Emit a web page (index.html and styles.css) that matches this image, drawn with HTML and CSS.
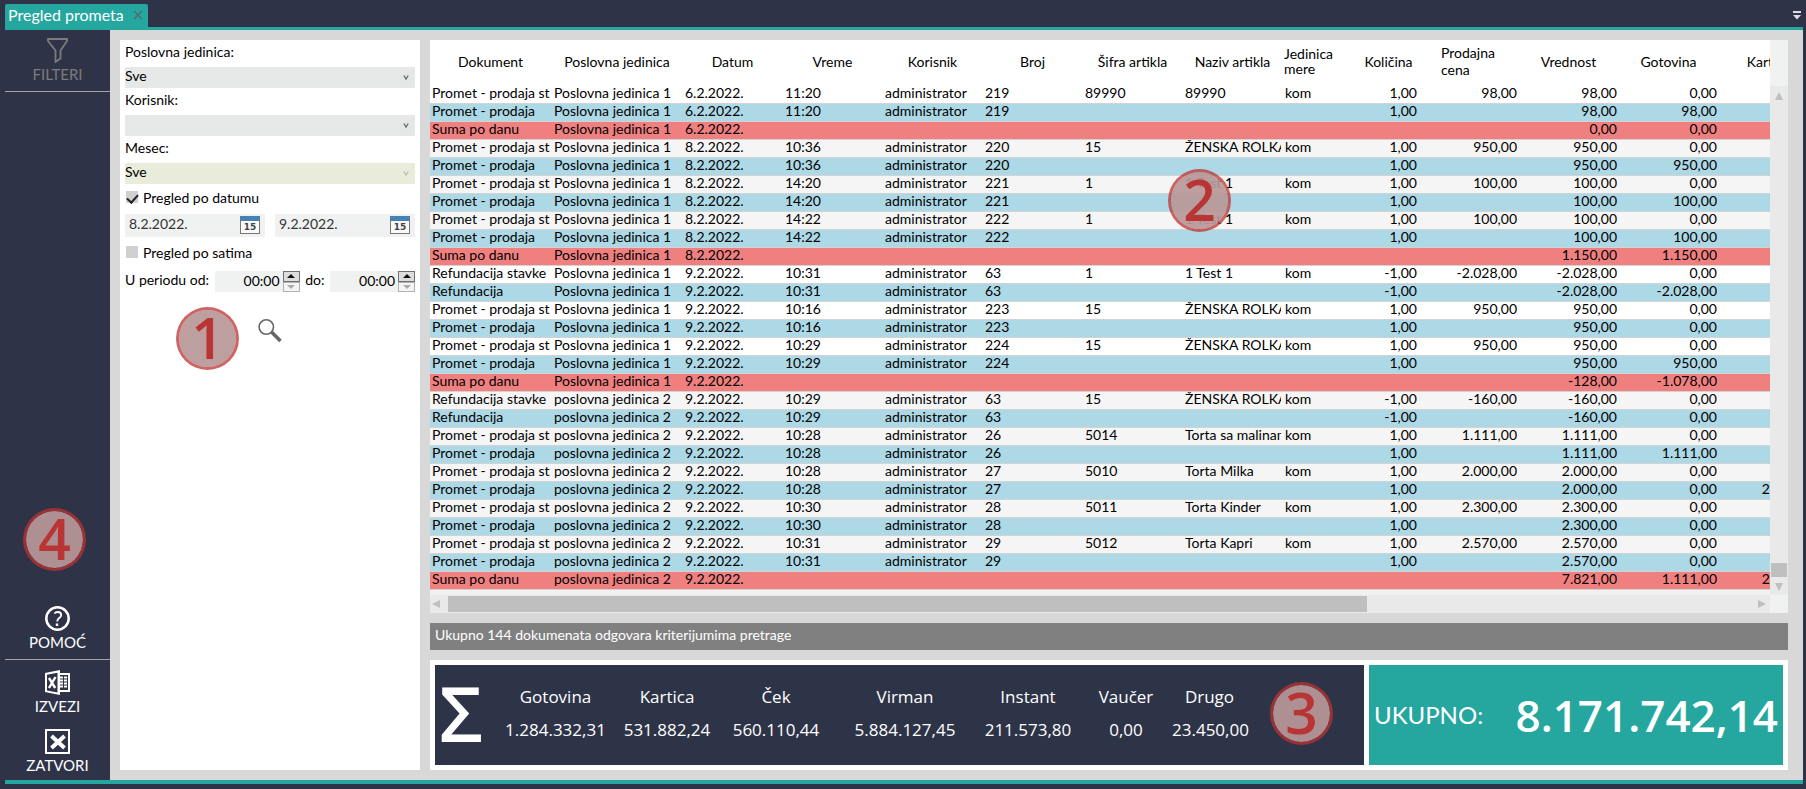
FILE: index.html
```html
<!DOCTYPE html>
<html lang="sr">
<head>
  <meta charset="UTF-8">
  <title>Pregled prometa</title>
  <link rel="stylesheet" href="styles.css">
</head>

<body>
  <!-- Tabs -->
  <header class="tab-bar">
    <div class="tab">
      <span class="tab-title">Pregled prometa</span>
      <button class="tab-close" aria-label="Zatvori karticu">
        <svg width="10" height="10" viewBox="0 0 10 10"><path d="M1 1l8 8M9 1L1 9" stroke="#4d6e75" stroke-width="1.6" fill="none"/></svg>
      </button>
    </div>
    <button class="tab-menu" aria-label="Lista kartica">
      <svg width="8" height="9" viewBox="0 0 8 9"><path d="M0 0h8v2H0zM0 4h8L4 8.500z" fill="#dcdde4"/></svg>
    </button>
  </header>

  <div class="workspace">
    <!-- Sidebar -->
    <nav class="sidebar">
      <button class="side-item divided disabled" disabled>
        <svg width="25" height="25" viewBox="0 0 25 25"><path d="M3 1h19v2l-6.500 9.500v8L10.500 24v-11.500L3 3z" stroke="#7c7c7c" stroke-width="1.800" fill="none"/></svg>
        <span>FILTERI</span>
      </button>
      <div class="side-space"></div>
      <button class="side-item divided">
        <svg width="25" height="25" viewBox="0 0 25 25" fill="none" stroke="#fff"><circle cx="12.500" cy="12.500" r="11.200" stroke-width="2.500"/><path d="M9.300 7.500q1.400-1.500 3.500-1.500 3.400 0 3.400 2.900 0 1.600-2 3t-2 3.600" stroke-width="1.800"/><path d="M12 17.500v2.500" stroke-width="2.400"/></svg>
        <span>POMOĆ</span>
      </button>
      <button class="side-item">
        <svg width="25" height="25" viewBox="0 0 25 25"><path d="M0 3L15 0v3h10v19H15v3L0 22zM2 4.700v15.700l10.500 2V2.700zM15 5v15h8V5z" fill="#fff" fill-rule="evenodd"/><path d="M4 8l6.200 10M10.500 7L4 18" stroke="#fff" stroke-width="2.400"/><path d="M15 7.500h7M15 10.500h7M15 13.500h7M15 16.500h7" stroke="#fff" stroke-width="2"/><path d="M18.500 5v14" stroke="#2e3448" stroke-width="1"/></svg>
        <span>IZVEZI</span>
      </button>
      <button class="side-item">
        <svg width="25" height="25" viewBox="0 0 25 25" fill="none" stroke="#fff"><path d="M1 1h23v23H1z" stroke-width="2"/><path d="M6.500 7l13 12M19.500 7l-13 12" stroke-width="4"/></svg>
        <span>ZATVORI</span>
      </button>
      <span class="badge badge-4">4</span>
    </nav>

    <main class="content">
      <!-- Filters -->
      <form class="filters">
        <label class="field-label" for="unit">Poslovna jedinica:</label>
        <div class="select-box">
          <select id="unit"><option>Sve</option></select>
          <svg width="6" height="6" viewBox="0 0 6 6"><path d="M.8.500L3 4 5.200.500" stroke="#666" stroke-width="1.300" fill="none"/></svg>
        </div>
        <label class="field-label" for="user">Korisnik:</label>
        <div class="select-box">
          <select id="user"><option></option></select>
          <svg width="6" height="6" viewBox="0 0 6 6"><path d="M.8.500L3 4 5.200.500" stroke="#666" stroke-width="1.300" fill="none"/></svg>
        </div>
        <label class="field-label" for="month">Mesec:</label>
        <div class="select-box muted">
          <select id="month" disabled><option>Sve</option></select>
          <svg width="6" height="6" viewBox="0 0 6 6"><path d="M.8.500L3 4 5.200.500" stroke="#bbb" stroke-width="1.300" fill="none"/></svg>
        </div>

        <label class="check"><input type="checkbox" checked><span>Pregled po datumu</span></label>
        <div class="dates">
          <div class="date-box">
            <input type="text" value="8.2.2022." aria-label="Datum od">
            <button type="button" class="calendar" aria-label="Izaberi datum od"><span>15</span></button>
          </div>
          <div class="date-box">
            <input type="text" value="9.2.2022." aria-label="Datum do">
            <button type="button" class="calendar" aria-label="Izaberi datum do"><span>15</span></button>
          </div>
        </div>

        <label class="check hours"><input type="checkbox"><span>Pregled po satima</span></label>
        <div class="period">
          <label for="from">U periodu od:</label>
          <div class="time-box">
            <input id="from" type="text" value="00:00">
            <div class="spinner">
              <button type="button" aria-label="Više"><svg width="8" height="4" viewBox="0 0 8 4"><path d="M0 4l4-4 4 4z" fill="#111"/></svg></button>
              <button type="button" class="down" aria-label="Manje"><svg width="8" height="4" viewBox="0 0 8 4"><path d="M0 0l4 4 4-4z" fill="#aaa"/></svg></button>
            </div>
          </div>
          <label for="to">do:</label>
          <div class="time-box">
            <input id="to" type="text" value="00:00">
            <div class="spinner">
              <button type="button" aria-label="Više"><svg width="8" height="4" viewBox="0 0 8 4"><path d="M0 4l4-4 4 4z" fill="#111"/></svg></button>
              <button type="button" class="down" aria-label="Manje"><svg width="8" height="4" viewBox="0 0 8 4"><path d="M0 0l4 4 4-4z" fill="#aaa"/></svg></button>
            </div>
          </div>
        </div>

        <button type="button" class="search" aria-label="Pretraga">
          <svg width="24" height="24" viewBox="0 0 24 24" fill="none" stroke="#666"><circle cx="8.300" cy="8" r="7.200" stroke-width="1.600"/><path d="M13.500 13l9 9" stroke-width="3.600"/></svg>
        </button>
        <span class="badge badge-1">1</span>
      </form>

      <section class="report">
        <!-- Data grid -->
        <div class="grid">
          <div class="grid-view">
            <table>
              <colgroup>
                <col class="c-doc"><col class="c-unit"><col><col><col><col><col><col><col class="c-jm"><col class="c-qty"><col><col><col><col>
              </colgroup>
              <thead>
                <tr><th>Dokument</th><th>Poslovna jedinica</th><th>Datum</th><th>Vreme</th><th>Korisnik</th><th>Broj</th><th>Šifra artikla</th><th>Naziv artikla</th><th class="left tight">Jedinica<br>mere</th><th>Količina</th><th class="left price">Prodajna<br>cena</th><th>Vrednost</th><th>Gotovina</th><th>Kartica</th></tr>
              </thead>
              <tbody>
                <tr><td>Promet - prodaja stavke</td><td>Poslovna jedinica 1</td><td>6.2.2022.</td><td>11:20</td><td>administrator</td><td>219</td><td>89990</td><td>89990</td><td>kom</td><td>1,00</td><td>98,00</td><td>98,00</td><td>0,00</td><td></td></tr>
                <tr class="doc"><td>Promet - prodaja</td><td>Poslovna jedinica 1</td><td>6.2.2022.</td><td>11:20</td><td>administrator</td><td>219</td><td></td><td></td><td></td><td>1,00</td><td></td><td>98,00</td><td>98,00</td><td></td></tr>
                <tr class="sum"><td>Suma po danu</td><td>Poslovna jedinica 1</td><td>6.2.2022.</td><td></td><td></td><td></td><td></td><td></td><td></td><td></td><td></td><td>0,00</td><td>0,00</td><td></td></tr>
                <tr class="alt"><td>Promet - prodaja stavke</td><td>Poslovna jedinica 1</td><td>8.2.2022.</td><td>10:36</td><td>administrator</td><td>220</td><td>15</td><td>ŽENSKA ROLKA</td><td>kom</td><td>1,00</td><td>950,00</td><td>950,00</td><td>0,00</td><td></td></tr>
                <tr class="doc"><td>Promet - prodaja</td><td>Poslovna jedinica 1</td><td>8.2.2022.</td><td>10:36</td><td>administrator</td><td>220</td><td></td><td></td><td></td><td>1,00</td><td></td><td>950,00</td><td>950,00</td><td></td></tr>
                <tr class="alt"><td>Promet - prodaja stavke</td><td>Poslovna jedinica 1</td><td>8.2.2022.</td><td>14:20</td><td>administrator</td><td>221</td><td>1</td><td>1 Test 1</td><td>kom</td><td>1,00</td><td>100,00</td><td>100,00</td><td>0,00</td><td></td></tr>
                <tr class="doc"><td>Promet - prodaja</td><td>Poslovna jedinica 1</td><td>8.2.2022.</td><td>14:20</td><td>administrator</td><td>221</td><td></td><td></td><td></td><td>1,00</td><td></td><td>100,00</td><td>100,00</td><td></td></tr>
                <tr class="alt"><td>Promet - prodaja stavke</td><td>Poslovna jedinica 1</td><td>8.2.2022.</td><td>14:22</td><td>administrator</td><td>222</td><td>1</td><td>1 Test 1</td><td>kom</td><td>1,00</td><td>100,00</td><td>100,00</td><td>0,00</td><td></td></tr>
                <tr class="doc"><td>Promet - prodaja</td><td>Poslovna jedinica 1</td><td>8.2.2022.</td><td>14:22</td><td>administrator</td><td>222</td><td></td><td></td><td></td><td>1,00</td><td></td><td>100,00</td><td>100,00</td><td></td></tr>
                <tr class="sum"><td>Suma po danu</td><td>Poslovna jedinica 1</td><td>8.2.2022.</td><td></td><td></td><td></td><td></td><td></td><td></td><td></td><td></td><td>1.150,00</td><td>1.150,00</td><td></td></tr>
                <tr><td>Refundacija stavke</td><td>Poslovna jedinica 1</td><td>9.2.2022.</td><td>10:31</td><td>administrator</td><td>63</td><td>1</td><td>1 Test 1</td><td>kom</td><td>-1,00</td><td>-2.028,00</td><td>-2.028,00</td><td>0,00</td><td></td></tr>
                <tr class="doc"><td>Refundacija</td><td>Poslovna jedinica 1</td><td>9.2.2022.</td><td>10:31</td><td>administrator</td><td>63</td><td></td><td></td><td></td><td>-1,00</td><td></td><td>-2.028,00</td><td>-2.028,00</td><td></td></tr>
                <tr><td>Promet - prodaja stavke</td><td>Poslovna jedinica 1</td><td>9.2.2022.</td><td>10:16</td><td>administrator</td><td>223</td><td>15</td><td>ŽENSKA ROLKA</td><td>kom</td><td>1,00</td><td>950,00</td><td>950,00</td><td>0,00</td><td></td></tr>
                <tr class="doc"><td>Promet - prodaja</td><td>Poslovna jedinica 1</td><td>9.2.2022.</td><td>10:16</td><td>administrator</td><td>223</td><td></td><td></td><td></td><td>1,00</td><td></td><td>950,00</td><td>0,00</td><td></td></tr>
                <tr><td>Promet - prodaja stavke</td><td>Poslovna jedinica 1</td><td>9.2.2022.</td><td>10:29</td><td>administrator</td><td>224</td><td>15</td><td>ŽENSKA ROLKA</td><td>kom</td><td>1,00</td><td>950,00</td><td>950,00</td><td>0,00</td><td></td></tr>
                <tr class="doc"><td>Promet - prodaja</td><td>Poslovna jedinica 1</td><td>9.2.2022.</td><td>10:29</td><td>administrator</td><td>224</td><td></td><td></td><td></td><td>1,00</td><td></td><td>950,00</td><td>950,00</td><td></td></tr>
                <tr class="sum"><td>Suma po danu</td><td>Poslovna jedinica 1</td><td>9.2.2022.</td><td></td><td></td><td></td><td></td><td></td><td></td><td></td><td></td><td>-128,00</td><td>-1.078,00</td><td></td></tr>
                <tr class="alt"><td>Refundacija stavke</td><td>poslovna jedinica 2</td><td>9.2.2022.</td><td>10:29</td><td>administrator</td><td>63</td><td>15</td><td>ŽENSKA ROLKA</td><td>kom</td><td>-1,00</td><td>-160,00</td><td>-160,00</td><td>0,00</td><td></td></tr>
                <tr class="doc"><td>Refundacija</td><td>poslovna jedinica 2</td><td>9.2.2022.</td><td>10:29</td><td>administrator</td><td>63</td><td></td><td></td><td></td><td>-1,00</td><td></td><td>-160,00</td><td>0,00</td><td></td></tr>
                <tr class="alt"><td>Promet - prodaja stavke</td><td>poslovna jedinica 2</td><td>9.2.2022.</td><td>10:28</td><td>administrator</td><td>26</td><td>5014</td><td>Torta sa malinama</td><td>kom</td><td>1,00</td><td>1.111,00</td><td>1.111,00</td><td>0,00</td><td></td></tr>
                <tr class="doc"><td>Promet - prodaja</td><td>poslovna jedinica 2</td><td>9.2.2022.</td><td>10:28</td><td>administrator</td><td>26</td><td></td><td></td><td></td><td>1,00</td><td></td><td>1.111,00</td><td>1.111,00</td><td></td></tr>
                <tr class="alt"><td>Promet - prodaja stavke</td><td>poslovna jedinica 2</td><td>9.2.2022.</td><td>10:28</td><td>administrator</td><td>27</td><td>5010</td><td>Torta Milka</td><td>kom</td><td>1,00</td><td>2.000,00</td><td>2.000,00</td><td>0,00</td><td></td></tr>
                <tr class="doc"><td>Promet - prodaja</td><td>poslovna jedinica 2</td><td>9.2.2022.</td><td>10:28</td><td>administrator</td><td>27</td><td></td><td></td><td></td><td>1,00</td><td></td><td>2.000,00</td><td>0,00</td><td>2.000,00</td></tr>
                <tr class="alt"><td>Promet - prodaja stavke</td><td>poslovna jedinica 2</td><td>9.2.2022.</td><td>10:30</td><td>administrator</td><td>28</td><td>5011</td><td>Torta Kinder</td><td>kom</td><td>1,00</td><td>2.300,00</td><td>2.300,00</td><td>0,00</td><td></td></tr>
                <tr class="doc"><td>Promet - prodaja</td><td>poslovna jedinica 2</td><td>9.2.2022.</td><td>10:30</td><td>administrator</td><td>28</td><td></td><td></td><td></td><td>1,00</td><td></td><td>2.300,00</td><td>0,00</td><td></td></tr>
                <tr class="alt"><td>Promet - prodaja stavke</td><td>poslovna jedinica 2</td><td>9.2.2022.</td><td>10:31</td><td>administrator</td><td>29</td><td>5012</td><td>Torta Kapri</td><td>kom</td><td>1,00</td><td>2.570,00</td><td>2.570,00</td><td>0,00</td><td></td></tr>
                <tr class="doc"><td>Promet - prodaja</td><td>poslovna jedinica 2</td><td>9.2.2022.</td><td>10:31</td><td>administrator</td><td>29</td><td></td><td></td><td></td><td>1,00</td><td></td><td>2.570,00</td><td>0,00</td><td></td></tr>
                <tr class="sum"><td>Suma po danu</td><td>poslovna jedinica 2</td><td>9.2.2022.</td><td></td><td></td><td></td><td></td><td></td><td></td><td></td><td></td><td>7.821,00</td><td>1.111,00</td><td>2.000,00</td></tr>
              </tbody>
            </table>
          </div>
          <div class="scroll-y">
            <svg width="8" height="8" viewBox="0 0 8 8"><path d="M0 8l4-8 4 8z" fill="#bfbfbf"/></svg>
            <div class="thumb-y"></div>
            <svg width="8" height="8" viewBox="0 0 8 8"><path d="M0 0l4 8 4-8z" fill="#bfbfbf"/></svg>
          </div>
          <div class="scroll-x">
            <svg width="8" height="8" viewBox="0 0 8 8"><path d="M8 0L0 4l8 4z" fill="#bfbfbf"/></svg>
            <div class="track-x"><div class="thumb-x"></div></div>
            <svg width="8" height="8" viewBox="0 0 8 8"><path d="M0 0l8 4-8 4z" fill="#bfbfbf"/></svg>
          </div>
          <span class="badge badge-2">2</span>
        </div>

        <div class="status">Ukupno 144 dokumenata odgovara kriterijumima pretrage</div>

        <!-- Totals -->
        <div class="totals">
          <div class="payments">
            <div class="sigma">Σ</div>
            <dl class="payment-list">
              <div><dt>Gotovina</dt><dd>1.284.332,31</dd></div>
              <div><dt>Kartica</dt><dd>531.882,24</dd></div>
              <div><dt>Ček</dt><dd>560.110,44</dd></div>
              <div><dt>Virman</dt><dd>5.884.127,45</dd></div>
              <div><dt>Instant</dt><dd>211.573,80</dd></div>
              <div><dt>Vaučer</dt><dd>0,00</dd></div>
              <div><dt>Drugo</dt><dd>23.450,00</dd></div>
            </dl>
            <span class="badge badge-3">3</span>
          </div>
          <div class="grand-total">
            <span class="total-label">UKUPNO:</span>
            <strong class="total-value">8.171.742,14</strong>
          </div>
        </div>
      </section>
    </main>
  </div>
</body>
</html>
```

FILE: styles.css
```css
/* ===============================
   BASE
=============================== */
* {
  box-sizing: border-box;
}
html, body {
  margin: 0;
  height: 100%;
}
body {
  display: flex;
  flex-direction: column;
  padding: 4px 3px 5px 5px;
  background: #2e3348;
  color: #000;
  font-family: Lato, "Open Sans", sans-serif;
  font-size: 14px;
}
button, input, select {
  margin: 0;
  padding: 0;
  border: 0;
  border-radius: 0;
  background: none;
  color: inherit;
  font: inherit;
}
svg {
  display: block;
  flex: none;
}

/* ===============================
   TABS
=============================== */
.tab-bar {
  display: flex;
  justify-content: space-between;
  align-items: center;
  border-bottom: 3px solid #25a7a0;
  border-top-right-radius: 3px;
}
.tab {
  display: flex;
  align-items: center;
  gap: 9px;
  height: 23px;
  padding: 0 5px 2px 3px;
  border-radius: 2px 2px 0 0;
  background: #25a7a0;
  color: #fff;
}
.tab-title {
  font-size: 16px;
}
.tab-menu {
  padding-right: 2px;
}

.workspace {
  display: flex;
  flex: 1;
  min-height: 0;
  border-bottom: 4px solid #25a7a0;
}

/* ===============================
   SIDEBAR
=============================== */
.sidebar {
  position: relative;
  display: flex;
  flex-direction: column;
  width: 105px;
}
.side-item {
  display: flex;
  flex-direction: column;
  align-items: center;
  padding: 8px 0 4px;
  color: #fff;
  font-size: 15px;
  line-height: 22px;
}
.side-item.divided {
  margin-bottom: 2px;
  padding-bottom: 6px;
  border-bottom: 1px solid #a3a5ae;
}
.side-item.disabled {
  color: #7c7c7c;
}
.side-space {
  flex: 1;
}

/* ===============================
   CONTENT
=============================== */
.content {
  display: flex;
  flex: 1;
  gap: 10px;
  min-width: 0;
  padding: 10px 15px 10px 10px;
  background: #d8d8d8;
}

/* Filters */
.filters {
  position: relative;
  flex: none;
  width: 300px;
  padding: 0 5px;
  background: #fff;
}
.field-label {
  display: block;
  line-height: 23px;
  padding-bottom: 4px;
}
.select-box {
  position: relative;
  height: 21px;
  background: #e6e8e7;
}
.select-box select {
  display: block;
  width: 100%;
  height: 17px;
  appearance: none;
  color: #000;
  opacity: 1;
}
.select-box svg {
  position: absolute;
  top: 8px;
  right: 6px;
}
.select-box.muted {
  background: #e9ecda;
}
.check {
  display: flex;
  align-items: center;
  gap: 5px;
  height: 30px;
  padding: 0 1px 4px;
}
.check.hours {
  height: 34px;
}
.check input {
  appearance: none;
  width: 12px;
  height: 12px;
  background: #d0d0d0;
}
.check input:checked::after {
  content: '';
  display: block;
  width: 9px;
  height: 5px;
  margin: 3px 0 0 1px;
  border: solid #222;
  border-width: 0 0 2px 2px;
  transform: rotate(-48deg);
}
.dates {
  display: flex;
  gap: 10px;
}
.date-box {
  display: flex;
  flex: 1;
  align-items: flex-start;
  justify-content: space-between;
  height: 23px;
  padding: 0 5px 0 4px;
  background: #f0f2f1;
  color: #333;
}
.date-box input {
  width: 100px;
  min-width: 0;
  height: 18px;
}
.calendar {
  flex: none;
  width: 20px;
  height: 18px;
  margin-top: 2px;
  border: 1px solid #777;
  border-top: 5px solid #4682b4;
  background: #fafafa;
  color: #444;
  font: bold 9px/12px "DejaVu Sans", sans-serif;
}
.period {
  display: flex;
  align-items: flex-start;
  justify-content: space-between;
  line-height: 18px;
}
.time-box {
  display: flex;
  align-items: flex-start;
  width: 85px;
  height: 21px;
  background: #f0f2f1;
}
.time-box input {
  flex: 1;
  min-width: 0;
  height: 19px;
  padding-right: 3px;
  text-align: right;
}
.spinner {
  display: flex;
  flex-direction: column;
  width: 17px;
  height: 21px;
}
.spinner button {
  display: flex;
  flex: 1;
  align-items: center;
  justify-content: center;
  border: 1px solid #707070;
  background: #ddd;
}
.spinner .down {
  border-color: #adb2b5;
  background: #f4f4f4;
}
.search {
  display: block;
  margin: 27px 0 0 133px;
}

/* ===============================
   DATA GRID
=============================== */
.report {
  display: flex;
  flex: 1;
  flex-direction: column;
  gap: 10px;
  min-width: 0;
}
.grid {
  position: relative;
  display: grid;
  flex: 1;
  grid-template-columns: minmax(0, 1fr) 18px;
  grid-template-rows: minmax(0, 1fr) 18px;
  min-height: 0;
  background: #f0f2f1;
}
.grid-view {
  overflow: hidden;
}
table {
  width: 1389px;
  table-layout: fixed;
  border-spacing: 0;
}
col {
  width: 100px;
}
.c-doc {
  width: 122px;
}
.c-unit {
  width: 131px;
}
.c-jm {
  width: 76px;
}
.c-qty {
  width: 60px;
}
th {
  height: 46px;
  padding: 0 1px 4px 0;
  background: #fff;
  font-weight: normal;
  line-height: 17px;
}
th.left {
  padding-left: 1px;
  text-align: left;
}
th.tight {
  line-height: 15px;
}
th.price {
  padding-left: 22px;
}
/* side borders keep long texts clear of the next column */
td {
  height: 18px;
  padding: 0;
  overflow: hidden;
  border: solid transparent;
  border-width: 0 2px;
  background: #fff linear-gradient(#d3d3d3, #d3d3d3) bottom / 100% 1px no-repeat border-box;
  line-height: 14px;
  vertical-align: top;
  white-space: nowrap;
  text-overflow: clip;
}
td:nth-child(n+10) {
  text-align: right;
}
.alt td {
  background-color: #f5f5f5;
}
.doc td {
  background-color: #add8e6;
}
.sum td {
  background-color: #f08080;
}

/* Scrollbars */
.scroll-y {
  display: flex;
  flex-direction: column;
  align-items: center;
  margin-top: 46px;
  padding: 6px 0 4px;
  background: #e9e9e9;
}
.thumb-y {
  width: 16px;
  height: 14px;
  margin: auto 0 6px;
  background: #bfbfbf;
}
.scroll-x {
  display: flex;
  align-items: center;
  padding: 0 4px 0 2px;
  background: #e9e9e9;
}
.track-x {
  flex: 1;
  margin: 0 8px;
}
.thumb-x {
  width: 70.6%;
  height: 16px;
  background: #bfbfbf;
}

.status {
  height: 27px;
  padding-left: 5px;
  background: #808080;
  color: #fff;
  line-height: 24px;
}

/* ===============================
   TOTALS
=============================== */
.totals {
  display: grid;
  grid-template-columns: 929fr 414fr;
  gap: 5px;
  padding: 5px;
  background: #fff;
  color: #fff;
}
.payments {
  position: relative;
  display: flex;
  align-items: center;
  height: 100px;
  padding-bottom: 4px;
  background: #2e3448;
  font-family: "Open Sans", "Noto Sans", sans-serif;
}
.sigma {
  width: 60px;
  padding-left: 4px;
  font-size: 76px;
  font-weight: 600;
  line-height: 96px;
}
.payment-list {
  display: grid;
  grid-template-columns: 121px 102px 116px 142px 104px 92px 75px;
  margin: 0;
  text-align: center;
  font-size: 17px;
  line-height: 33px;
  white-space: nowrap;
}
.payment-list dd {
  margin: 0;
}
.grand-total {
  display: flex;
  align-items: center;
  justify-content: space-between;
  padding: 0 5px;
  background: #25a7a0;
}
.total-label {
  padding-bottom: 2px;
  font-size: 24px;
}
.total-value {
  font-family: "Open Sans", "Noto Sans", sans-serif;
  font-size: 44px;
  font-weight: 600;
}

/* ===============================
   NUMBERED MARKERS
=============================== */
.badge {
  position: absolute;
  width: 63px;
  height: 63px;
  border: 3px solid rgba(190, 50, 50, 0.75);
  border-radius: 50%;
  background: rgba(184, 152, 152, 0.93);
  background-clip: padding-box;
  color: #b93434;
  font: 600 57px/54px "Open Sans", "Noto Sans", sans-serif;
  text-align: center;
}
.badge-1 {
  top: 267px;
  left: 56px;
}
.badge-2 {
  top: 129px;
  left: 738px;
}
.badge-3 {
  top: 17px;
  right: 31px;
}
.badge-4 {
  left: 18px;
  bottom: 209px;
}
```
